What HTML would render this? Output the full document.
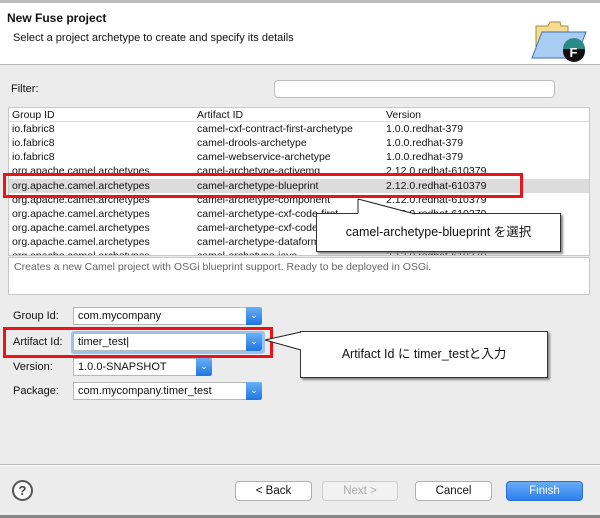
<!DOCTYPE html>
<html><head><style>
*{margin:0;padding:0;box-sizing:border-box}
body{width:600px;height:518px;position:relative;overflow:hidden;background:#ececec;font-family:"Liberation Sans","Noto Sans CJK JP",sans-serif;font-size:11px;color:#111}
.a{position:absolute}
.hdr{left:0;top:0;width:600px;height:65px;background:#fff;border-top:3px solid #bdbdbd;border-bottom:1px solid #b8b8b8}
.tbl{left:8px;top:107px;width:582px;height:149px;background:#fff;border:1px solid #c8c8c8;overflow:hidden}
.row{position:absolute;left:0;width:580px;height:14px;line-height:14px;font-size:10.5px}
.row span{position:absolute}
.c1{left:3px}.c2{left:188px}.c3{left:377px}
.inp{background:#fff;border:1px solid #b8b8b8;height:18px;line-height:16px;padding-left:4px;font-size:11px}
.dd{position:absolute;right:-1px;top:-1px;width:16px;height:18px;background:linear-gradient(#6ab0f7,#1e74e0);border-radius:0 3px 3px 0;color:#fff;font-size:9px;text-align:center;line-height:16px}
.lbl{font-size:11px}
.btn{top:481px;height:20px;border:1px solid #b0b0b0;border-radius:4px;background:#fff;text-align:center;line-height:18px;font-size:11.5px}
.call{background:#fff;border:1px solid #333;box-shadow:2px 2px 2px #888;font-size:12.5px;text-align:center}
</style></head><body>
<div class="a hdr"></div>
<div class="a" style="left:7px;top:11px;font-weight:bold;font-size:12px">New Fuse project</div>
<div class="a" style="left:13px;top:32px;font-size:11px">Select a project archetype to create and specify its details</div>
<svg class="a" style="left:530px;top:18px" width="60" height="45">
<path d="M6 8 L18 8 L20 4 L30 4 L31 8 L38 8 L38 30 L6 30Z" fill="#f4dc92" stroke="#a98a3c"/>
<path d="M2 40 L12 14 L56 14 L46 40Z" fill="#a9cdf2" stroke="#3b6fb0"/>
<circle cx="44" cy="33" r="11" fill="#111"/>
<path d="M33 31 A11 11 0 0 1 55 31" fill="#2a8a8a"/>
<text x="39.5" y="39" fill="#fff" font-family="Liberation Sans" font-weight="bold" font-size="13">F</text>
</svg>
<div class="a lbl" style="left:11px;top:83px">Filter:</div>
<div class="a" style="left:274px;top:80px;width:281px;height:18px;background:#fff;border:1px solid #bbb;border-radius:4px"></div>
<div class="a tbl">
<div class="row" style="top:0;background:#fff;border-bottom:1px solid #ddd"><span class="c1">Group ID</span><span class="c2">Artifact ID</span><span class="c3">Version</span></div>
<div class="row" style="top:14px"><span class="c1">io.fabric8</span><span class="c2">camel-cxf-contract-first-archetype</span><span class="c3">1.0.0.redhat-379</span></div>
<div class="row" style="top:28px"><span class="c1">io.fabric8</span><span class="c2">camel-drools-archetype</span><span class="c3">1.0.0.redhat-379</span></div>
<div class="row" style="top:42px"><span class="c1">io.fabric8</span><span class="c2">camel-webservice-archetype</span><span class="c3">1.0.0.redhat-379</span></div>
<div class="row" style="top:56px"><span class="c1">org.apache.camel.archetypes</span><span class="c2">camel-archetype-activemq</span><span class="c3">2.12.0.redhat-610379</span></div>
<div class="row" style="top:71px;background:#dcdcdc"><span class="c1">org.apache.camel.archetypes</span><span class="c2">camel-archetype-blueprint</span><span class="c3">2.12.0.redhat-610379</span></div>
<div class="row" style="top:85px"><span class="c1">org.apache.camel.archetypes</span><span class="c2">camel-archetype-component</span><span class="c3">2.12.0.redhat-610379</span></div>
<div class="row" style="top:99px"><span class="c1">org.apache.camel.archetypes</span><span class="c2">camel-archetype-cxf-code-first</span><span class="c3">2.12.0.redhat-610379</span></div>
<div class="row" style="top:113px"><span class="c1">org.apache.camel.archetypes</span><span class="c2">camel-archetype-cxf-code</span><span class="c3">2.12.0.redhat-610379</span></div>
<div class="row" style="top:127px"><span class="c1">org.apache.camel.archetypes</span><span class="c2">camel-archetype-dataformat</span><span class="c3">2.12.0.redhat-610379</span></div>
<div class="row" style="top:141px"><span class="c1">org.apache.camel.archetypes</span><span class="c2">camel-archetype-java</span><span class="c3">2.12.0.redhat-610379</span></div>
</div>
<div class="a" style="left:8px;top:257px;width:582px;height:38px;background:#fff;border:1px solid #c8c8c8;color:#666;font-size:10.5px;padding:3px 5px">Creates a new Camel project with OSGi blueprint support. Ready to be deployed in OSGi.</div>
<div class="a" style="left:3px;top:173px;width:520px;height:25px;border:3px solid #e8141a"></div>
<div class="a call" style="left:316px;top:213px;width:245px;height:39px;line-height:37px">camel-archetype-blueprint を選択</div>
<svg class="a" style="left:350px;top:195px" width="80" height="25"><path d="M8 4 L8 19 L65 19 Z" fill="#fff"/><path d="M8 4 L8 18 M8 4 L65 19" stroke="#222"/></svg>

<div class="a lbl" style="left:13px;top:310px">Group Id:</div>
<div class="a inp" style="left:73px;top:307px;width:189px">com.mycompany<div class="dd">⌄</div></div>
<div class="a lbl" style="left:13px;top:336px">Artifact Id:</div>
<div class="a" style="left:71px;top:331px;width:194px;height:23px;background:#9cc3ee;border-radius:3px"></div>
<div class="a inp" style="left:73px;top:333px;width:189px">timer_test|<div class="dd">⌄</div></div>
<div class="a" style="left:3px;top:327px;width:270px;height:31px;border:3px solid #e8141a"></div>
<div class="a lbl" style="left:13px;top:361px">Version:</div>
<div class="a inp" style="left:73px;top:358px;width:139px">1.0.0-SNAPSHOT<div class="dd">⌄</div></div>
<div class="a lbl" style="left:13px;top:385px">Package:</div>
<div class="a inp" style="left:73px;top:382px;width:189px">com.mycompany.timer_test<div class="dd">⌄</div></div>
<div class="a call" style="left:300px;top:331px;width:248px;height:47px;line-height:45px">Artifact Id に timer_testと入力</div>
<svg class="a" style="left:260px;top:325px" width="45" height="35"><path d="M5 15 L41 7 L41 25 Z" fill="#fff"/><path d="M5 15 L41 7 M5 15 L41 25" stroke="#222"/></svg>

<div class="a" style="left:0;top:464px;width:600px;height:2px;border-top:1px solid #bcbcbc;border-bottom:1px solid #fafafa"></div>
<div class="a" style="left:12px;top:480px;width:21px;height:21px;border:2px solid #555;border-radius:50%;text-align:center;line-height:17px;font-weight:bold;font-size:13px;color:#444;background:#fafafa">?</div>
<div class="a btn" style="left:235px;width:77px">&lt; Back</div>
<div class="a btn" style="left:322px;width:76px;color:#aaa;background:#f2f2f2;border-color:#ccc">Next &gt;</div>
<div class="a btn" style="left:415px;width:77px">Cancel</div>
<div class="a btn" style="left:506px;width:77px;background:linear-gradient(#69adf8,#2b7ff0);border-color:#2a6fd0;color:#fff">Finish</div>
<div class="a" style="left:0;top:515px;width:600px;height:3px;background:#888"></div>
</body></html>
